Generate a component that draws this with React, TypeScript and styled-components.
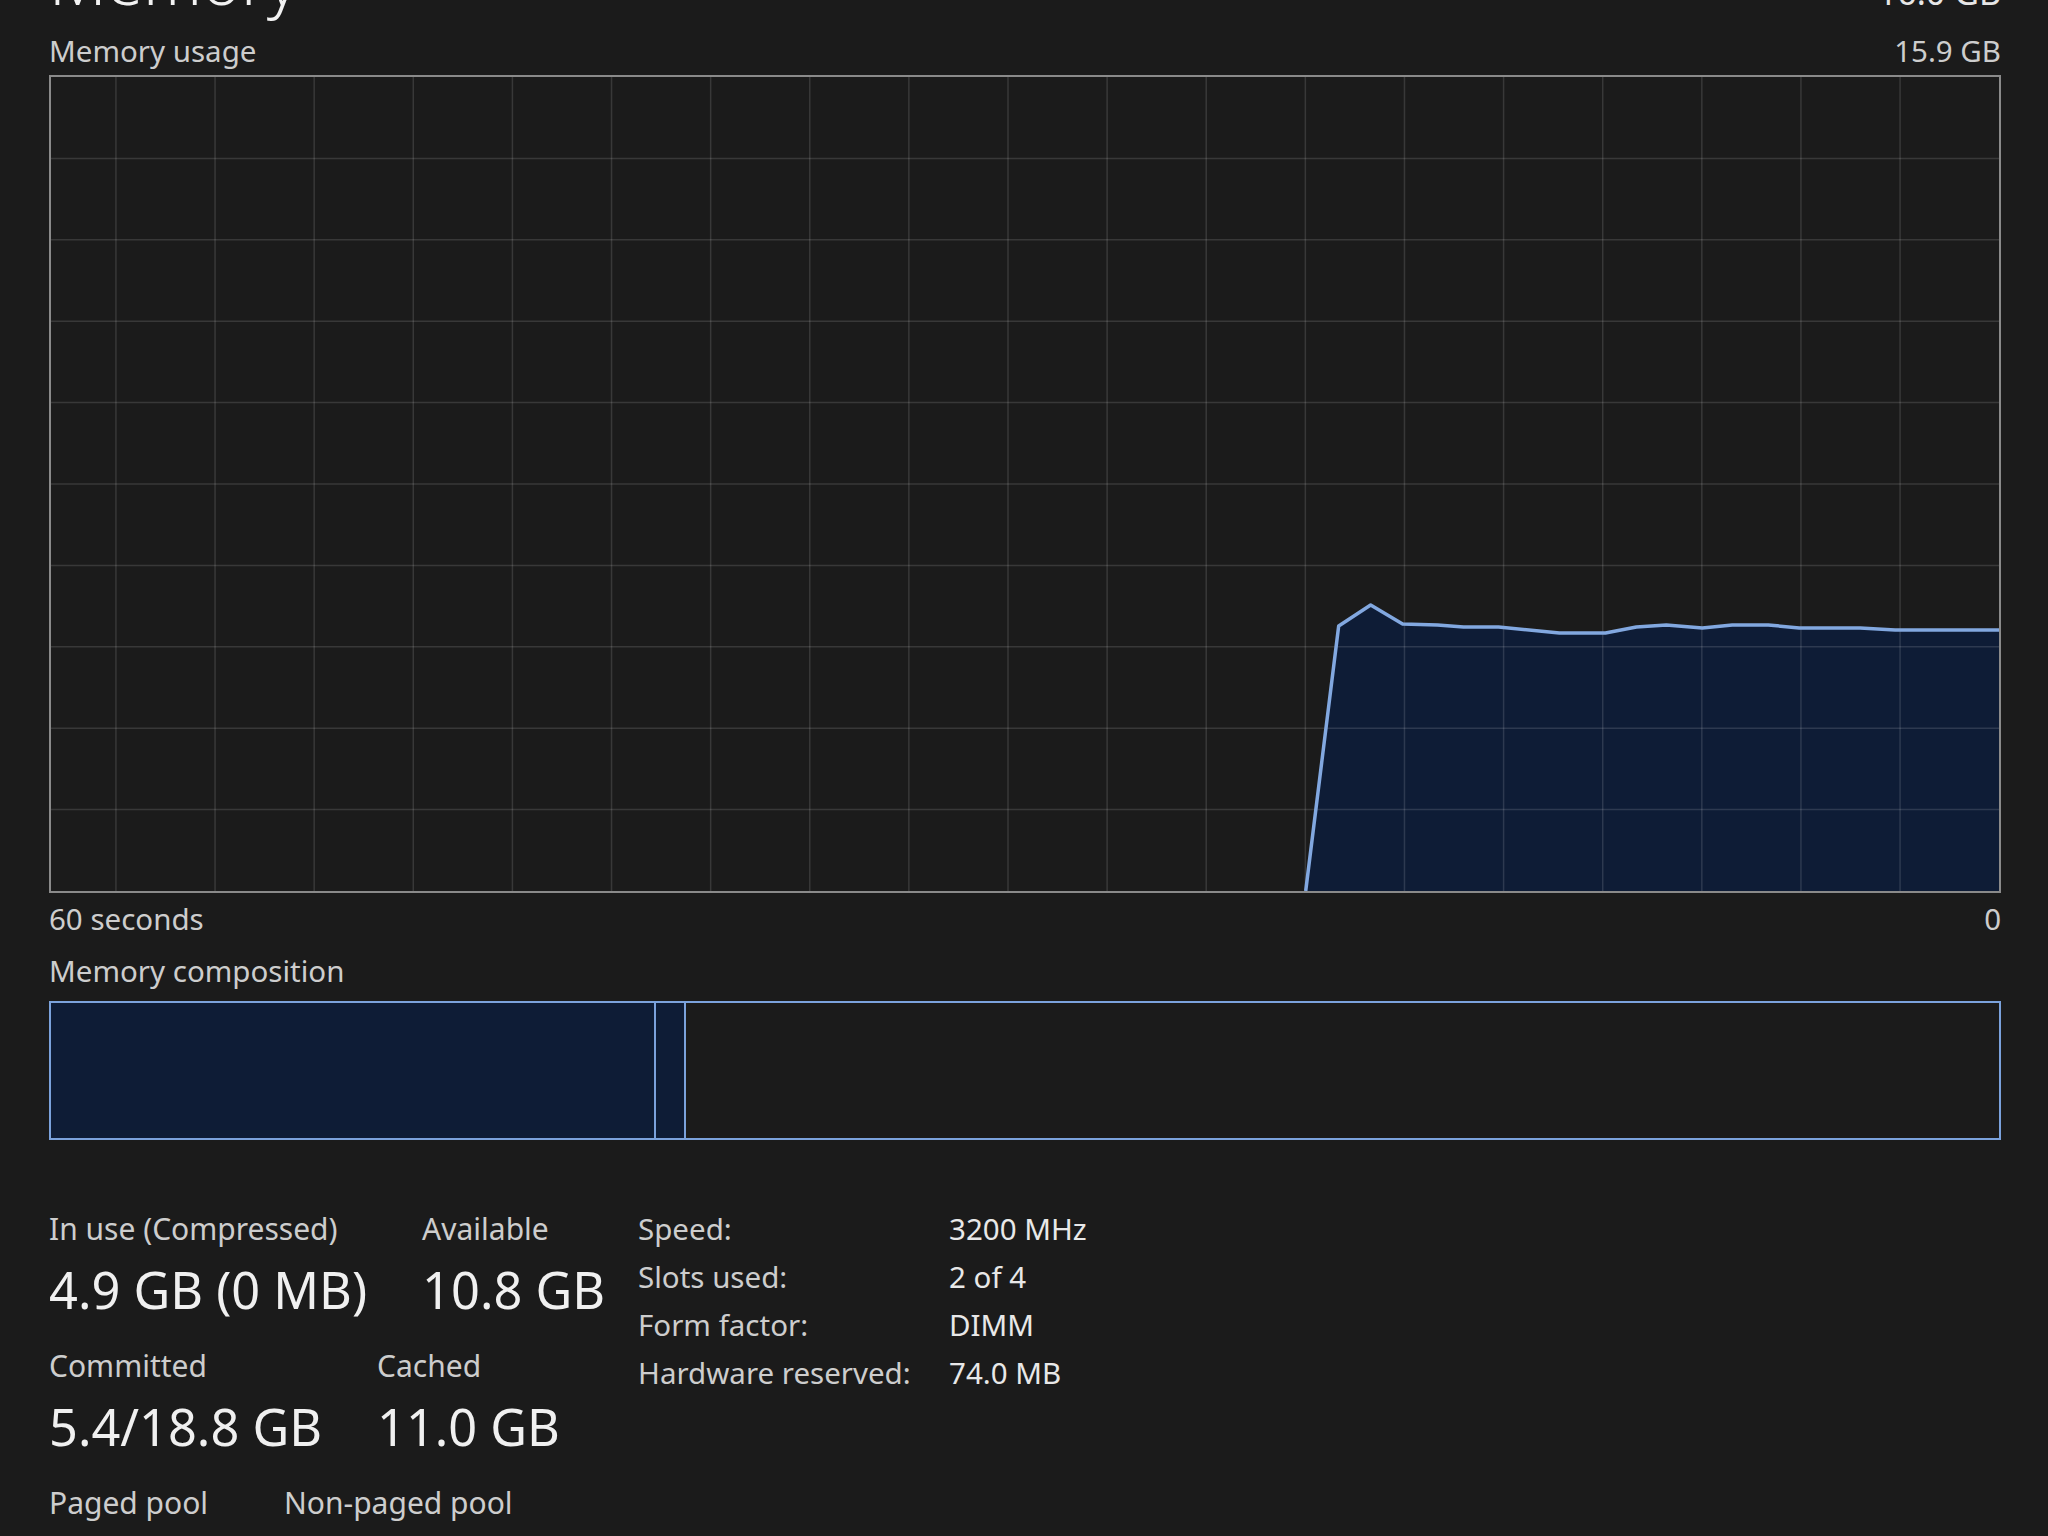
import React from 'react';
import styled, { createGlobalStyle } from 'styled-components';

const GlobalStyle = createGlobalStyle`
  html, body {
    margin: 0;
    padding: 0;
    background: #1b1b1b;
  }
  body {
    font-family: "Noto Sans", "Open Sans", sans-serif;
    color: #cdcdcd;
    overflow: hidden;
  }
`;

const Page = styled.div`
  height: 1536px;
  box-sizing: border-box;
  padding: 0 47px 0 49px;
  overflow: hidden;
`;

const Header = styled.div`
  display: flex;
  justify-content: space-between;
  align-items: baseline;
  margin-top: -56px;
  height: 68px;
`;

const Title = styled.h1`
  margin: 0;
  font-size: 66px;
  font-weight: 300;
  line-height: 70px;
  color: #f2f2f2;
`;

const Total = styled.div`
  font-size: 34px;
  line-height: 40px;
  color: #e6e6e6;
`;

const LabelRow = styled.div<{ $top: number }>`
  display: flex;
  justify-content: space-between;
  margin-top: ${(p) => p.$top}px;
  font-size: 29.5px;
  line-height: 36px;
  height: 36px;
`;

const ChartFrame = styled.div`
  margin-top: 6px;
  height: 818px;
  box-sizing: border-box;
  border: 2px solid #8a8a8a;

  svg {
    display: block;
    width: 100%;
    height: 100%;
  }
`;

const CompositionBar = styled.div`
  display: flex;
  margin-top: 12px;
  height: 139px;
  box-sizing: border-box;
  border: 2px solid #7ba2dc;
`;

const Segment = styled.div<{ $filled?: boolean; $last?: boolean }>`
  background: ${(p) => (p.$filled ? '#0e1c36' : 'transparent')};
  border-right: ${(p) => (p.$last ? 'none' : '2px solid #7ba2dc')};
  flex-grow: ${(p) => (p.$last ? 1 : 0)};
  flex-shrink: 0;
`;

const Stats = styled.div`
  display: flex;
  gap: 33px;
  margin-top: 71px;
`;

const StatGroup = styled.div`
  display: flex;
  flex-direction: column;
  gap: 28px;
`;

const StatRow = styled.div`
  display: flex;
  gap: 55px;
`;

const Stat = styled.div<{ $minWidth?: number }>`
  display: flex;
  flex-direction: column;
  gap: 13px;
  min-width: ${(p) => p.$minWidth ?? 0}px;
`;

const StatLabel = styled.div`
  font-size: 30px;
  line-height: 36px;
  color: #cdcdcd;
  white-space: nowrap;
`;

const StatValue = styled.div`
  font-size: 50.5px;
  line-height: 60px;
  color: #f0f0f0;
  white-space: nowrap;
`;

const Specs = styled.div`
  display: grid;
  grid-template-columns: 311px auto;
  row-gap: 12px;
  align-content: start;
  font-size: 29.5px;
  line-height: 36px;
`;

const SpecName = styled.div`
  color: #cdcdcd;
  white-space: nowrap;
`;

const SpecValue = styled.div`
  color: #e8e8e8;
  white-space: nowrap;
`;

// usage history, sampled once per second (x in chart units, y from the top)
const usage: [number, number][] = [
  [1256, 817],
  [1289, 551],
  [1321, 530],
  [1353, 549],
  [1388, 550],
  [1414, 552],
  [1449, 552],
  [1510, 558],
  [1556, 558],
  [1587, 552],
  [1617, 550],
  [1653, 553],
  [1683, 550],
  [1719, 550],
  [1750, 553],
  [1811, 553],
  [1846, 555],
  [1950, 555],
];

const W = 1950;
const H = 817;

const UsageChart = () => {
  const line = usage.map(([x, y]) => `${x},${y}`).join(' ');
  const area = `${line} ${W},${H} ${usage[0][0]},${H}`;
  const cols = Array.from({ length: 19 }, (_, i) => 65 + i * 99.22);
  const rows = Array.from({ length: 9 }, (_, i) => (i + 1) * (H / 10));

  return (
    <ChartFrame>
      <svg viewBox={`0 0 ${W} ${H}`} preserveAspectRatio="none">
        <polygon points={area} fill="#0e1c36" />
        {cols.map((x) => (
          <line key={`c${x}`} x1={x} x2={x} y1={0} y2={H} stroke="rgba(255,255,255,0.13)" strokeWidth={1.5} />
        ))}
        {rows.map((y) => (
          <line key={`r${y}`} x1={0} x2={W} y1={y} y2={y} stroke="rgba(255,255,255,0.13)" strokeWidth={1.5} />
        ))}
        <polyline
          points={line}
          fill="none"
          stroke="#82a8e0"
          strokeWidth={3.5}
          strokeLinejoin="round"
          vectorEffect="non-scaling-stroke"
        />
      </svg>
    </ChartFrame>
  );
};

const specs = [
  ['Speed:', '3200 MHz'],
  ['Slots used:', '2 of 4'],
  ['Form factor:', 'DIMM'],
  ['Hardware reserved:', '74.0 MB'],
];

export default function App() {
  return (
    <>
      <GlobalStyle />
      <Page>
        <Header>
          <Title>Memory</Title>
          <Total>16.0 GB</Total>
        </Header>

        <LabelRow $top={21}>
          <span>Memory usage</span>
          <span>15.9 GB</span>
        </LabelRow>
        <UsageChart />
        <LabelRow $top={8}>
          <span>60 seconds</span>
          <span>0</span>
        </LabelRow>

        <LabelRow $top={16}>
          <span>Memory composition</span>
        </LabelRow>
        <CompositionBar>
          <Segment $filled style={{ width: '30.95%' }} />
          <Segment $filled style={{ width: '1.45%' }} />
          <Segment $last />
        </CompositionBar>

        <Stats>
          <StatGroup>
            <StatRow>
              <Stat>
                <StatLabel>In use (Compressed)</StatLabel>
                <StatValue>4.9 GB (0 MB)</StatValue>
              </Stat>
              <Stat>
                <StatLabel>Available</StatLabel>
                <StatValue>10.8 GB</StatValue>
              </Stat>
            </StatRow>
            <StatRow>
              <Stat>
                <StatLabel>Committed</StatLabel>
                <StatValue>5.4/18.8 GB</StatValue>
              </Stat>
              <Stat>
                <StatLabel>Cached</StatLabel>
                <StatValue>11.0 GB</StatValue>
              </Stat>
            </StatRow>
            <StatRow>
              <Stat $minWidth={180}>
                <StatLabel>Paged pool</StatLabel>
              </Stat>
              <Stat>
                <StatLabel>Non-paged pool</StatLabel>
              </Stat>
            </StatRow>
          </StatGroup>

          <Specs>
            {specs.map(([name, value]) => (
              <React.Fragment key={name}>
                <SpecName>{name}</SpecName>
                <SpecValue>{value}</SpecValue>
              </React.Fragment>
            ))}
          </Specs>
        </Stats>
      </Page>
    </>
  );
}
